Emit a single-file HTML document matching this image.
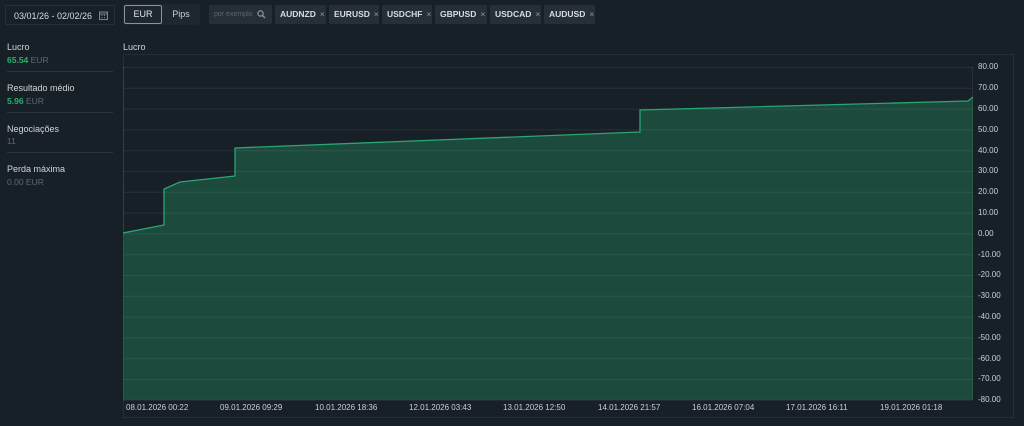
<!DOCTYPE html>
<html><head><meta charset="utf-8"><style>
*{margin:0;padding:0;box-sizing:border-box}
body{width:1024px;height:426px;background:#182027;font-family:"Liberation Sans",sans-serif;color:#c9d0d6;position:relative;overflow:hidden;font-size:9px}
.abs{position:absolute}
.date{left:5px;top:5px;width:110px;height:20px;border:1px solid #27313a;border-radius:2px;font-size:9px;color:#d6dce0;padding:5px 0 0 8px}
.seg{left:123px;top:4px;width:77px;height:21px;background:#1e272f;border-radius:3px}
.eur{left:124px;top:5px;width:38px;height:19px;border:1px solid #8a949c;border-radius:2px;text-align:center;line-height:17px;color:#e4e8ea}
.pips{left:162px;top:5px;width:38px;height:19px;text-align:center;line-height:19px;color:#c9d0d6}
.search{left:209px;top:5px;width:63px;height:19px;background:#262f37;border-radius:2px;font-size:7px;color:#5b666f;padding:6px 0 0 5px}
.tag{top:5px;height:19px;background:#262f37;border-radius:2px;line-height:19px;padding-left:5px;color:#d6dce0;font-weight:bold;font-size:8.5px}
.tag span{color:#8e98a0;font-weight:normal;margin-left:4px}
.lab{left:7px;color:#d0d6da;font-size:9px}
.val{left:7px;font-size:8.5px;color:#5d6870}
.val b{color:#22b36e}
.sep{left:7px;width:106px;height:1px;background:#2b343c}
.yl{left:978px;font-size:8px;color:#c9d0d6}
.xl{top:403px;font-size:8px;color:#c9d0d6}
</style></head><body>
<div class="abs date">03/01/26 - 02/02/26
<svg class="abs" style="left:93px;top:5px" width="9" height="9" viewBox="0 0 9 9"><rect x=".5" y="1" width="8" height="7.5" fill="none" stroke="#7c868e"/><path d="M1 3h7M2.5 4.5h1M5 4.5h1M2.5 6.5h1M5 6.5h1" stroke="#7c868e"/></svg></div>
<div class="abs seg"></div>
<div class="abs eur">EUR</div>
<div class="abs pips">Pips</div>
<div class="abs search">por exemplo
<svg class="abs" style="left:48px;top:5px" width="9" height="9" viewBox="0 0 9 9"><circle cx="3.5" cy="3.5" r="2.6" fill="none" stroke="#8e98a0" stroke-width="1.2"/><path d="M5.5 5.5L8 8" stroke="#8e98a0" stroke-width="1.3"/></svg></div>
<div class="abs tag" style="left:275px;width:51px">AUDNZD<span>×</span></div>
<div class="abs tag" style="left:329px;width:50px">EURUSD<span>×</span></div>
<div class="abs tag" style="left:382px;width:50px">USDCHF<span>×</span></div>
<div class="abs tag" style="left:435px;width:52px">GBPUSD<span>×</span></div>
<div class="abs tag" style="left:490px;width:51px">USDCAD<span>×</span></div>
<div class="abs tag" style="left:544px;width:51px">AUDUSD<span>×</span></div>

<div class="abs lab" style="top:42px">Lucro</div>
<div class="abs val" style="top:55px"><b>65.54</b> EUR</div>
<div class="abs sep" style="top:71px"></div>
<div class="abs lab" style="top:83px">Resultado médio</div>
<div class="abs val" style="top:96px"><b>5.96</b> EUR</div>
<div class="abs sep" style="top:112px"></div>
<div class="abs lab" style="top:124px">Negociações</div>
<div class="abs val" style="top:136px">11</div>
<div class="abs sep" style="top:152px"></div>
<div class="abs lab" style="top:164px">Perda máxima</div>
<div class="abs val" style="top:177px">0.00 EUR</div>

<div class="abs lab" style="left:123px;top:42px">Lucro</div>
<svg class="abs" style="left:0;top:0" width="1024" height="426">
<rect x="123.5" y="54.5" width="890" height="363" fill="none" stroke="#252e36"/>
<path d="M123 233 L164 225 L164 189 L180 182 L235 176 L235 148 L640 132 L640 110 L968 101 L973 97 L973 400 L123 400 Z" fill="#1c4a3d"/>
<g stroke="#ffffff" stroke-opacity=".07" stroke-width="1">
<path d="M123 67.5H973M123 88.3H973M123 109.1H973M123 129.9H973M123 150.7H973M123 171.5H973M123 192.3H973M123 213.1H973M123 233.9H973M123 254.7H973M123 275.5H973M123 296.3H973M123 317.1H973M123 337.9H973M123 358.7H973M123 379.5H973M123 400.3H973"/>
<path d="M123.5 67V400M972.5 67V400"/>
</g>
<path d="M123 233 L164 225 L164 189 L180 182 L235 176 L235 148 L640 132 L640 110 L968 101 L973 97" fill="none" stroke="#2aa573" stroke-width="1.3"/>
</svg>
<div class="abs yl" style="top:62px">80.00</div>
<div class="abs yl" style="top:83px">70.00</div>
<div class="abs yl" style="top:104px">60.00</div>
<div class="abs yl" style="top:125px">50.00</div>
<div class="abs yl" style="top:146px">40.00</div>
<div class="abs yl" style="top:166px">30.00</div>
<div class="abs yl" style="top:187px">20.00</div>
<div class="abs yl" style="top:208px">10.00</div>
<div class="abs yl" style="top:229px">0.00</div>
<div class="abs yl" style="top:250px">-10.00</div>
<div class="abs yl" style="top:270px">-20.00</div>
<div class="abs yl" style="top:291px">-30.00</div>
<div class="abs yl" style="top:312px">-40.00</div>
<div class="abs yl" style="top:333px">-50.00</div>
<div class="abs yl" style="top:354px">-60.00</div>
<div class="abs yl" style="top:374px">-70.00</div>
<div class="abs yl" style="top:395px">-80.00</div>
<div class="abs xl" style="left:126px">08.01.2026 00:22</div>
<div class="abs xl" style="left:220px">09.01.2026 09:29</div>
<div class="abs xl" style="left:315px">10.01.2026 18:36</div>
<div class="abs xl" style="left:409px">12.01.2026 03:43</div>
<div class="abs xl" style="left:503px">13.01.2026 12:50</div>
<div class="abs xl" style="left:598px">14.01.2026 21:57</div>
<div class="abs xl" style="left:692px">16.01.2026 07:04</div>
<div class="abs xl" style="left:786px">17.01.2026 16:11</div>
<div class="abs xl" style="left:880px">19.01.2026 01:18</div>
</body></html>
